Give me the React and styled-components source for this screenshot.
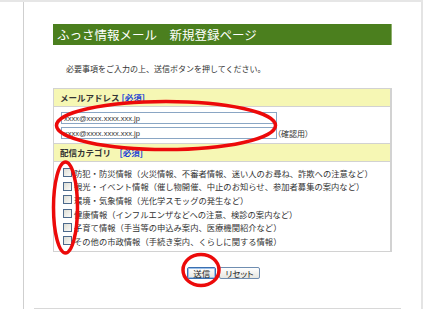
import React from 'react'
import styled, { createGlobalStyle } from 'styled-components'

const GlobalStyle = createGlobalStyle`
  html, body {
    margin: 0;
    padding: 0;
    background: #fff;
  }
  body {
    border-top: 2px solid #e6e6e6;
    font-family: "Noto Sans CJK JP", "Noto Sans", sans-serif;
    color: #333;
  }
`

const categories = [
  '防犯・防災情報（火災情報、不審者情報、迷い人のお尋ね、詐欺への注意など）',
  '観光・イベント情報（催し物開催、中止のお知らせ、参加者募集の案内など）',
  '環境・気象情報（光化学スモッグの発生など）',
  '健康情報（インフルエンザなどへの注意、検診の案内など）',
  '子育て情報（手当等の申込み案内、医療機関紹介など）',
  'その他の市政情報（手続き案内、くらしに関する情報）',
]

export default function App() {
  return (
    <>
      <GlobalStyle />
      <Page>
        <TitleBar>ふっさ情報メール　新規登録ページ</TitleBar>
        <Lead>必要事項をご入力の上、送信ボタンを押してください。</Lead>

        <FormTable>
          <SectionHead>
            メールアドレス <Required>[必須]</Required>
          </SectionHead>
          <EmailBody>
            <InputRow>
              <TextInput readOnly value="xxxx@xxxx.xxxx.xxx.jp" />
            </InputRow>
            <InputRow>
              <TextInput readOnly value="xxxx@xxxx.xxxx.xxx.jp" />
              <Note>（確認用）</Note>
            </InputRow>
          </EmailBody>

          <SectionHead>
            配信カテゴリ　<Required>[必須]</Required>
          </SectionHead>
          <CheckList>
            {categories.map((c) => (
              <CheckRow key={c}>
                <Check type="checkbox" />
                <span>{c}</span>
              </CheckRow>
            ))}
          </CheckList>
        </FormTable>

        <Buttons>
          <Btn $focused>送信</Btn>
          <Btn>リセット</Btn>
        </Buttons>

        <Footer />
      </Page>

      {/* red hand-drawn markings over the form */}
      <Marks width="423" height="309" viewBox="0 0 423 309">
        <ellipse cx="166" cy="125.5" rx="109.5" ry="24" />
        <ellipse cx="65.5" cy="207.5" rx="12" ry="45.5" />
        <ellipse cx="201" cy="270" rx="18" ry="15.5" />
      </Marks>
    </>
  )
}

const Page = styled.div`
  margin-left: 23px;
  height: 307px;
  box-sizing: border-box;
  border-left: 1px solid #cfcfcf;
  border-right: 2px solid #e4e4e4;
  padding: 22px 29px 0;
  display: flex;
  flex-direction: column;
`

const TitleBar = styled.h1`
  margin: 0;
  height: 21px;
  line-height: 21px;
  background: #4b7f1e;
  color: #fff;
  font-size: 12.5px;
  font-weight: normal;
  padding-left: 4px;
  border-right: 1px solid #8fb06e;
  white-space: nowrap;
`

const Lead = styled.p`
  margin: 18px 0 0 13px;
  font-size: 8px;
  line-height: 12px;
  color: #333;
  white-space: nowrap;
`

const FormTable = styled.div`
  margin-top: 13px;
  border: 1px solid #d2d2d2;
  border-right-width: 2px;
`

const SectionHead = styled.div`
  height: 17px;
  line-height: 17px;
  background: #f6f7b4;
  border-bottom: 1px solid #d2d2d2;
  padding-left: 6px;
  font-size: 8.5px;
  font-weight: bold;
  color: #333;
  white-space: nowrap;
`

const Required = styled.span`
  color: #1a3fd6;
`

const EmailBody = styled.div`
  display: flex;
  flex-direction: column;
  gap: 3px;
  padding: 5px 0 4px 7px;
  border-bottom: 1px solid #d2d2d2;
`

const InputRow = styled.div`
  display: flex;
  align-items: flex-end;
`

const TextInput = styled.input`
  width: 216px;
  height: 12px;
  box-sizing: border-box;
  border: 1px solid #8aa6c4;
  padding: 0 2px;
  font-family: "Liberation Sans", sans-serif;
  font-size: 7.5px;
  color: #333;
  background: #fff;
  outline: none;
`

const Note = styled.span`
  font-size: 8px;
  line-height: 10px;
  color: #333;
  font-feature-settings: "palt";
`

const CheckList = styled.div`
  padding: 4px 0 3px 9px;
`

const CheckRow = styled.label`
  display: flex;
  align-items: center;
  height: 13.6px;
  font-size: 8.3px;
  color: #333;
  white-space: nowrap;
`

const Check = styled.input`
  appearance: none;
  margin: 0 2px 0 0;
  width: 9px;
  height: 9px;
  box-sizing: border-box;
  border: 1px solid #4d6a8c;
  background: linear-gradient(135deg, #dcdcd4, #fbfbf8);
`

const Buttons = styled.div`
  margin-top: 15px;
  display: flex;
  justify-content: center;
  gap: 3px;
  padding-left: 2px;
`

const Btn = styled.button`
  height: 12px;
  padding: 0 5px;
  box-sizing: border-box;
  font-family: "Noto Sans CJK JP", sans-serif;
  font-size: 8.5px;
  line-height: 10px;
  font-feature-settings: "palt";
  color: #222;
  border: 1px solid ${(p) => (p.$focused ? '#3a6fb0' : '#6f8db0')};
  border-radius: 2px;
  background: linear-gradient(#ffffff, #e6e6e0);
  box-shadow: ${(p) => (p.$focused ? 'inset 0 0 0 1px #9cc0ea' : 'none')};
`

const Footer = styled.div`
  margin: auto -9px 0 -19px;
  border-bottom: 1px solid #d8d8d8;
  height: 0;
`

const Marks = styled.svg`
  position: absolute;
  top: 0;
  left: 0;
  pointer-events: none;
  fill: none;
  stroke: #ec0a0a;
  stroke-width: 3.5;
`
